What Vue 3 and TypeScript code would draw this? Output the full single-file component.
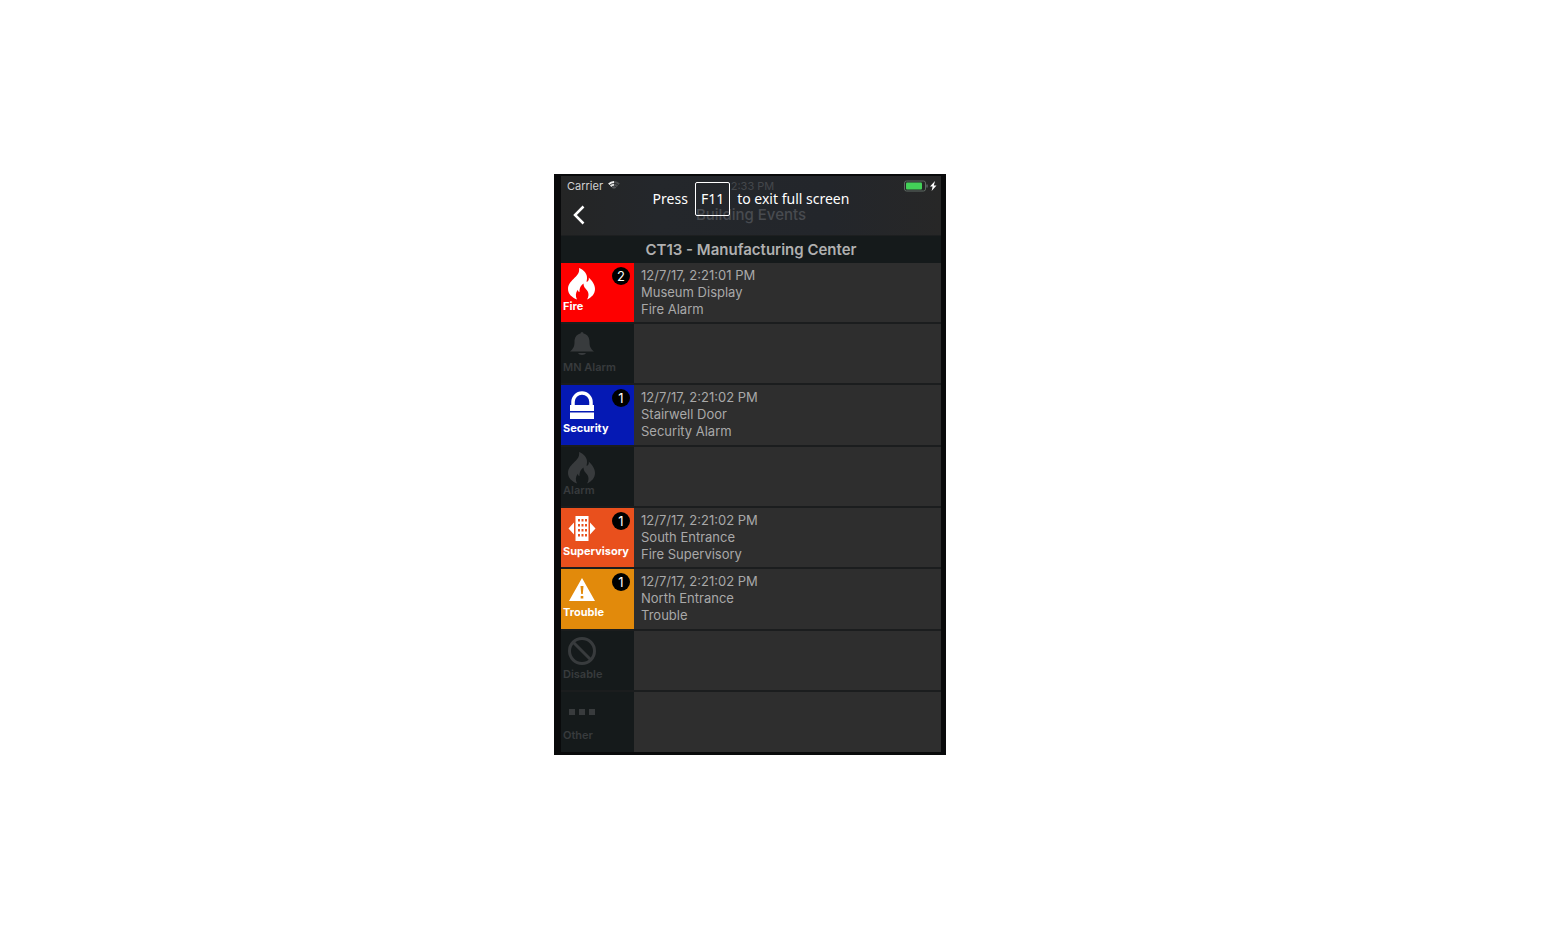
<script setup lang="ts">
type IconName = 'flame' | 'bell' | 'lock' | 'building' | 'warning' | 'ban' | 'dots'

interface EventRow {
  label: string
  icon: IconName
  tone: string
  count?: number
  lines: string[]
}

const rows: EventRow[] = [
  { label: 'Fire', icon: 'flame', tone: 'fire', count: 2, lines: ['12/7/17, 2:21:01 PM', 'Museum Display', 'Fire Alarm'] },
  { label: 'MN Alarm', icon: 'bell', tone: 'idle', lines: [] },
  { label: 'Security', icon: 'lock', tone: 'security', count: 1, lines: ['12/7/17, 2:21:02 PM', 'Stairwell Door', 'Security Alarm'] },
  { label: 'Alarm', icon: 'flame', tone: 'idle', lines: [] },
  { label: 'Supervisory', icon: 'building', tone: 'supervisory', count: 1, lines: ['12/7/17, 2:21:02 PM', 'South Entrance', 'Fire Supervisory'] },
  { label: 'Trouble', icon: 'warning', tone: 'trouble', count: 1, lines: ['12/7/17, 2:21:02 PM', 'North Entrance', 'Trouble'] },
  { label: 'Disable', icon: 'ban', tone: 'idle', lines: [] },
  { label: 'Other', icon: 'dots', tone: 'idle', lines: [] },
]
</script>

<template>
  <main class="page">
    <section class="phone">
      <header class="top">
        <div class="status">
          <span class="carrier">Carrier
            <svg class="wifi" viewBox="0 0 12 9" aria-hidden="true">
              <path d="M.8 3.2A7.5 7.5 0 0 1 6 1" stroke="#eee" />
              <path d="M6 1a7.5 7.5 0 0 1 5.2 2.2" stroke="#4b4d4f" />
              <path d="M2.6 5.2A4.8 4.8 0 0 1 6 3.8" stroke="#ddd" />
              <path d="M6 3.8a4.8 4.8 0 0 1 3.4 1.4" stroke="#4b4d4f" />
              <path d="M4.4 7a2.3 2.3 0 0 1 3.2 0" stroke="#55575a" />
            </svg>
          </span>
          <span class="clock">2:33 PM</span>
          <svg class="battery" viewBox="0 0 34 12" aria-label="Battery charging">
            <rect x=".5" y="1" width="21" height="10" rx="2" fill="none" stroke="#5d6a62" />
            <rect x="2" y="2.500" width="16" height="7" rx="1" fill="#43d158" />
            <path d="M23 4.500v3" stroke="#5d6064" stroke-width="1.500" />
            <path d="M31 1l-5 5.500h2.600l-1 4.500 4.900-5.500h-2.700z" fill="#fff" />
          </svg>
        </div>
        <div class="nav">
          <button class="back" type="button" aria-label="Back">
            <svg viewBox="0 0 12 20" aria-hidden="true"><path d="M10.500 1.500L2 10l8.500 8.500" /></svg>
          </button>
          <h1>Building Events</h1>
        </div>
        <div class="toast" role="status">Press <kbd>F11</kbd> to exit full screen</div>
      </header>
      <h2>CT13 - Manufacturing Center</h2>
      <ul class="list">
        <li v-for="row in rows" :key="row.label" class="row">
          <div class="tile" :class="row.tone">
            <svg class="icon" viewBox="0 0 30 32" aria-hidden="true">
              <path v-if="row.icon === 'flame'" d="M12 0C17 2 20.500 6 20 10.500c-.1 1.500-.5 2.500-.3 3.500 1.800-.5 2.500-2.500 2-4.500C25 12.500 28 16.500 28 21c0 5-3.500 8.500-8 10.500 1.500-2.500 2-5 1-7.500-1.200-3-4.500-4-4.500-8.500-3.500 2.500-4 5.500-4 8.500-1.200-.3-1.500-1.200-1.700-2.300C8.500 24.500 8.300 28 10 31.500 5 29.500 1 26 1 21c0-4.500 2.500-7 5.500-10C9.500 8 13 5 12 0z" />
              <path v-else-if="row.icon === 'bell'" d="M13.500 4.500a1.500 1.500 0 0 1 3 0C21 5.500 22.500 9 22.500 13c0 4.500 1 6.500 4.500 9.500H3C6.500 19.500 7.500 17.500 7.500 13c0-4 1.500-7.500 6-8.500zM11 24h8c-1.200 2.500-6.800 2.500-8 0z" />
              <g v-else-if="row.icon === 'lock'">
                <path d="M6 15v-3a9 9 0 0 1 18 0v3" fill="none" stroke="currentColor" stroke-width="3.500" />
                <path d="M3 15h24v6H3zM3 22.500h24V29H3z" />
              </g>
              <path v-else-if="row.icon === 'building'" fill-rule="evenodd" d="M8.500 3h13v25h-13zM11 6v2.500h2V6zm3.500 0v2.500h2V6zM18 6v2.500h2V6zm-7 5v2.500h2V11zm3.500 0v2.500h2V11zm3.500 0v2.500h2V11zm-7 5v2.500h2V16zm3.500 0v2.500h2V16zm3.500 0v2.500h2V16zm-7 5v2.500h2V21zm3.500 0v2.500h2V21zm3.500 0v2.500h2V21zM7 9.500v12L1.500 15.500zM23 9.500v12l5.500-6z" />
              <path v-else-if="row.icon === 'warning'" fill-rule="evenodd" d="M15 4l13 23H2zM13.500 12l.7 8h1.600l.7-8zM13.700 22v2.500h2.600V22z" />
              <g v-else-if="row.icon === 'ban'" fill="none" stroke="currentColor" stroke-width="3">
                <circle cx="15" cy="15" r="12.500" />
                <path d="M6.500 6.500l17 17" />
              </g>
              <path v-else d="M2 12h6v6H2zM12 12h6v6h-6zM22 12h6v6h-6z" />
            </svg>
            <span class="label">{{ row.label }}</span>
            <span v-if="row.count" class="badge">{{ row.count }}</span>
          </div>
          <div class="detail">
            <p v-for="line in row.lines" :key="line">{{ line }}</p>
          </div>
        </li>
      </ul>
    </section>
  </main>
</template>

<style>
body { margin: 0; background: #fff; }
</style>

<style scoped>
* { box-sizing: border-box; }
.page {
  min-height: 100vh;
  display: flex;
  align-items: center;
  justify-content: center;
  padding: 0 44px 2px 0;
  font-family: Inter, "Liberation Sans", sans-serif;
}
.phone {
  width: 100%;
  max-width: 392px;
  padding: 2px 5px 3px 7px;
  background: #090a0b;
}
.top {
  position: relative;
  min-height: 60px;
  background: linear-gradient(90deg, #242525, #24272b 25%, #23262b 70%, #272727);
  border-bottom: 1px solid #1d1f20;
}
.status {
  display: grid;
  grid-template-columns: 1fr auto 1fr;
  align-items: center;
  height: 20px;
  padding: 0 3px 0 6px;
  font-size: 11px;
}
.carrier { display: flex; align-items: center; gap: 5px; color: #d2d2d2; }
.wifi { width: 12px; height: 9px; fill: none; stroke-width: 2; }
.clock { color: #44474b; }
.battery { width: 34px; height: 12px; justify-self: end; }
.nav {
  display: grid;
  grid-template-columns: 36px 1fr 36px;
  align-items: center;
  height: 39px;
}
.back {
  display: flex;
  justify-content: center;
  padding: 0;
  border: 0;
  background: none;
}
.back svg {
  width: 12px;
  height: 20px;
  fill: none;
  stroke: #fff;
  stroke-width: 2.5;
}
h1 {
  margin: 0;
  text-align: center;
  font-size: 15px;
  line-height: 20px;
  font-weight: 500;
  color: #484b50;
}
.toast {
  position: absolute;
  inset: 6px 0 auto;
  display: flex;
  align-items: center;
  justify-content: center;
  gap: 7px;
  font-family: "Noto Sans", "Open Sans", sans-serif;
  font-size: 14px;
  color: #fff;
}
kbd {
  padding: 0 5px;
  border: 1px solid #fff;
  border-radius: 2px;
  font: inherit;
  line-height: 32px;
}
h2 {
  margin: 0;
  background: #151a1b;
  color: #b0b0b0;
  text-align: center;
  font-size: 15px;
  line-height: 27px;
  font-weight: 600;
}
.list {
  display: grid;
  grid-auto-rows: 1fr;
  gap: 2px;
  min-height: 489px;
  margin: 0;
  padding: 0;
  list-style: none;
  background: #1b1d1e;
}
.row {
  display: grid;
  grid-template-columns: 73px 1fr;
}
.tile {
  position: relative;
  padding: 5px 2px 0;
  color: #fff;
}
.icon {
  display: block;
  width: 30px;
  height: 32px;
  margin-left: 4px;
  fill: currentColor;
}
.label {
  display: block;
  font-size: 11px;
  line-height: 12px;
  font-weight: 700;
}
.badge {
  position: absolute;
  top: 4px;
  right: 4px;
  width: 18px;
  height: 18px;
  border-radius: 50%;
  background: #000;
  text-align: center;
  font-size: 13px;
  line-height: 18px;
}
.fire { background: #fe0000; }
.security { background: #0519b4; }
.supervisory { background: #e9501d; }
.trouble { background: #e28a0b; }
.idle { background: #151a1b; color: #383b3d; }
.idle .label { font-weight: 600; }
.detail {
  padding: 4px 7px;
  background: #2e2e2e;
  color: #a9a9a9;
  font-size: 13px;
  line-height: 17px;
}
.detail p { margin: 0; }
</style>
